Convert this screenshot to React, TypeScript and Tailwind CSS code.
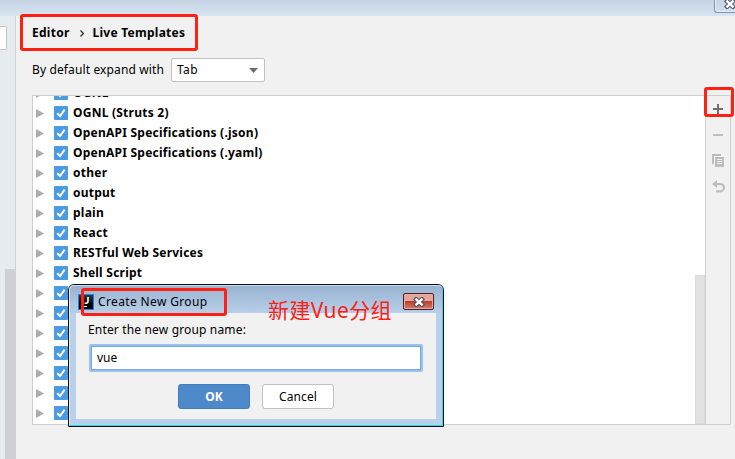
import React from "react";

const groups = [
  "OGNL",
  "OGNL (Struts 2)",
  "OpenAPI Specifications (.json)",
  "OpenAPI Specifications (.yaml)",
  "other",
  "output",
  "plain",
  "React",
  "RESTful Web Services",
  "Shell Script",
  "",
  "",
  "",
  "",
  "",
  "",
  "",
];

function GroupRow({ name }: { name: string }) {
  return (
    <div className="flex h-5 shrink-0 items-center pl-[3px]">
      <svg className="h-[9px] w-2 shrink-0" viewBox="0 0 8 9">
        <path d="M0 0L8 4.5L0 9Z" fill="#acacac" />
      </svg>
      <span className="ml-[10px] flex h-[14px] w-[14px] shrink-0 items-center justify-center rounded-[1px] bg-[#4b9be3]">
        <svg className="h-[14px] w-[14px]" viewBox="0 0 14 14" fill="none">
          <path d="M3.2 7.2L6 10L10.7 3.6" stroke="white" strokeWidth="2" />
        </svg>
      </span>
      <span className="ml-[5px] font-bold tracking-[0.24px] whitespace-nowrap">{name}</span>
    </div>
  );
}

function CloseGlyph() {
  return (
    <svg className="h-[10px] w-[12px] shrink-0" viewBox="0 0 12 10" fill="none">
      <path d="M1.5 0.8L10.5 9.2M10.5 0.8L1.5 9.2" stroke="#4c5365" strokeWidth="4.4" />
      <path d="M2.4 1.6L9.6 8.4M9.6 1.6L2.4 8.4" stroke="white" strokeWidth="2.5" />
    </svg>
  );
}

function Toolbar() {
  return (
    <div className="flex w-[26px] shrink-0 flex-col items-center border-x border-[#cfcfcf] pt-[8px]">
      <svg className="h-[10px] w-[10px]" viewBox="0 0 10 10">
        <path d="M4 0h2v4h4v2H6v4H4V6H0V4h4z" fill="#6e6e6e" />
      </svg>
      <svg className="mt-5 h-[2px] w-[10px]" viewBox="0 0 10 2">
        <path d="M0 0h10v2H0z" fill="#bdbdbd" />
      </svg>
      <svg className="mt-[18px] h-[13px] w-3" viewBox="0 0 12 13">
        <path d="M0 0H9V2H2V10H0Z" fill="#bdbdbd" />
        <path fillRule="evenodd" d="M3 3h9v10H3zM5 5v1h5V5zM5 7v1h5V7zM5 9v1h5V9z" fill="#bdbdbd" />
      </svg>
      <svg className="mt-[13px] ml-px h-[13px] w-[13px]" viewBox="0 0 13 13">
        <path d="M0 4L5 0V8Z" fill="#bdbdbd" />
        <path d="M3 4H8.2A3.7 3.7 0 0 1 8.2 11.4H4" fill="none" stroke="#bdbdbd" strokeWidth="2.2" />
      </svg>
    </div>
  );
}

function Dialog() {
  return (
    <div className="absolute top-[284px] left-[68px] flex h-[143px] w-[376px] rounded-t-[6px] border border-[#111] bg-[#b9d0ea]">
      <div className="flex min-w-0 flex-1 flex-col rounded-t-[5px] border border-t-[#c8dced] border-r-[#35d5ec] border-b-[#35d5ec] border-l-[#dcebf8] bg-linear-to-b from-[#99b3d0] to-[#b9d0ea] to-[28px] px-[6px] pb-[6px]">
        <div className="flex h-[27px] shrink-0 items-center">
          <span className="mt-[4px] ml-[2px] flex h-4 w-4 shrink-0 flex-col border border-[#1683ee] bg-linear-to-b from-[#363636] to-black">
            <svg viewBox="0 0 14 14" className="h-[14px] w-[14px]">
              <path d="M9 2V6.3Q9 8.2 7.2 8.2H5.6" fill="none" stroke="white" strokeWidth="1.6" />
              <path d="M4 11h4v1H4z" fill="white" />
            </svg>
          </span>
          <span className="mt-[5px] ml-[4px] text-[12px] tracking-[0.36px]">Create New Group</span>
          <span className="mt-[4px] mr-[2px] ml-auto flex h-[17px] w-[31px] items-center justify-center rounded-[2px] border border-[#4b1e29] bg-linear-to-b from-[#e5a69c] from-45% via-[#ba3f2c] via-50% to-[#d77b65] shadow-[inset_0_0_0_1px_#e9aaa0]">
            <CloseGlyph />
          </span>
        </div>
        <div className="flex min-h-0 flex-1 flex-col bg-[#f1f1f1] px-[13px] pt-[8px]">
          <div className="-ml-px h-[18px] leading-[18px] tracking-[0.16px]">Enter the new group name:</div>
          <div className="mt-[5px] flex h-7 w-[334px] shrink-0 items-center rounded-[2px] border-2 border-[#97c3f3] bg-white">
            <div className="flex h-full flex-1 items-center border border-[#79a5d7] pl-[5px]">vue</div>
          </div>
          <div className="mt-3 ml-[89px] flex gap-3">
            <button className="h-[25px] w-[72px] rounded-[3px] border border-[#437dbc] bg-[#4e8ac9] font-bold text-white">OK</button>
            <button className="h-[25px] w-[72px] rounded-[3px] border border-[#c1c1c1] bg-white tracking-[0.1px]">Cancel</button>
          </div>
        </div>
      </div>
    </div>
  );
}

export default function App() {
  return (
    <div className="relative flex h-[459px] w-[735px] flex-col overflow-hidden bg-[#f1f1f1] font-['Noto_Sans','Noto_Sans_CJK_SC',sans-serif] text-[12px] text-black">
      <header className="flex h-4 shrink-0 justify-end bg-linear-to-b from-[#c5d3e2] to-[#d7e4f2]">
        <div className="flex h-[13px] w-[21px] items-start overflow-hidden rounded-bl-[3px] border-b border-l border-[#8291ac] pl-[9px] shadow-[inset_1px_-1px_0_#e6eef7]">
          <div className="-mt-px flex">
            <CloseGlyph />
          </div>
        </div>
      </header>
      <div className="flex min-h-0 flex-1">
        <aside className="flex w-4 shrink-0 flex-col border-r border-[#cdd1d5] bg-[#e6ebef]">
          <div className="mt-[10px] h-6 w-[7px] rounded-r-[2px] border border-l-0 border-[#c1c3c5] bg-white" />
          <div className="mt-[219px] ml-[5px] w-[11px] flex-1 bg-[#cdd1d5]" />
        </aside>
        <main className="flex min-w-0 flex-1 flex-col pl-4">
          <div className="mt-[7px] flex h-5 items-center font-bold tracking-[0.26px]">
            <span>Editor</span>
            <svg className="mr-[9px] ml-[10px] h-[7px] w-1" viewBox="0 0 4 7" fill="none">
              <path d="M0.5 0.5L3.3 3.5L0.5 6.5" stroke="#333" strokeWidth="1.2" />
            </svg>
            <span>Live Templates</span>
          </div>
          <div className="mt-[15px] flex h-6 items-center">
            <span className="w-[139px] tracking-[0.13px] whitespace-nowrap">By default expand with</span>
            <div className="flex h-6 w-[94px] items-center justify-between rounded-[2px] border border-[#c1c1c1] bg-white pr-[6px] pl-[5px]">
              <span className="tracking-[0.4px]">Tab</span>
              <svg className="h-[5px] w-[9px]" viewBox="0 0 9 5">
                <path d="M0 0H9L4.5 5Z" fill="#6e6e6e" />
              </svg>
            </div>
          </div>
          <div className="mt-[13px] flex h-[330px] w-[699px] border-y border-l border-[#cfcfcf]">
            <div className="flex min-w-0 flex-1 bg-white">
              <div className="flex min-w-0 flex-1 flex-col overflow-hidden">
                <div className="-mt-[13px] flex flex-col">
                  {groups.map((name, i) => (
                    <GroupRow key={i} name={name} />
                  ))}
                </div>
              </div>
              <div className="mt-[179px] w-[10px] border border-[#dadada] bg-[#e2e2e2]" />
            </div>
            <Toolbar />
          </div>
        </main>
      </div>
      <Dialog />
      <div className="absolute top-[14px] left-[20px] h-[37px] w-[178px] rounded-[3px] border-3 border-[#ff2014]" />
      <div className="absolute top-[87px] left-[704px] h-[30px] w-[30px] rounded-[3px] border-3 border-[#ff2014]" />
      <div className="absolute top-[288px] left-[81px] h-[28px] w-[146px] rounded-[3px] border-3 border-[#ff2014]" />
      <div className="absolute top-[298px] left-[268px] text-[21px] leading-6 tracking-[0.4px] whitespace-nowrap text-[#ff2014]">新建Vue分组</div>
    </div>
  );
}
